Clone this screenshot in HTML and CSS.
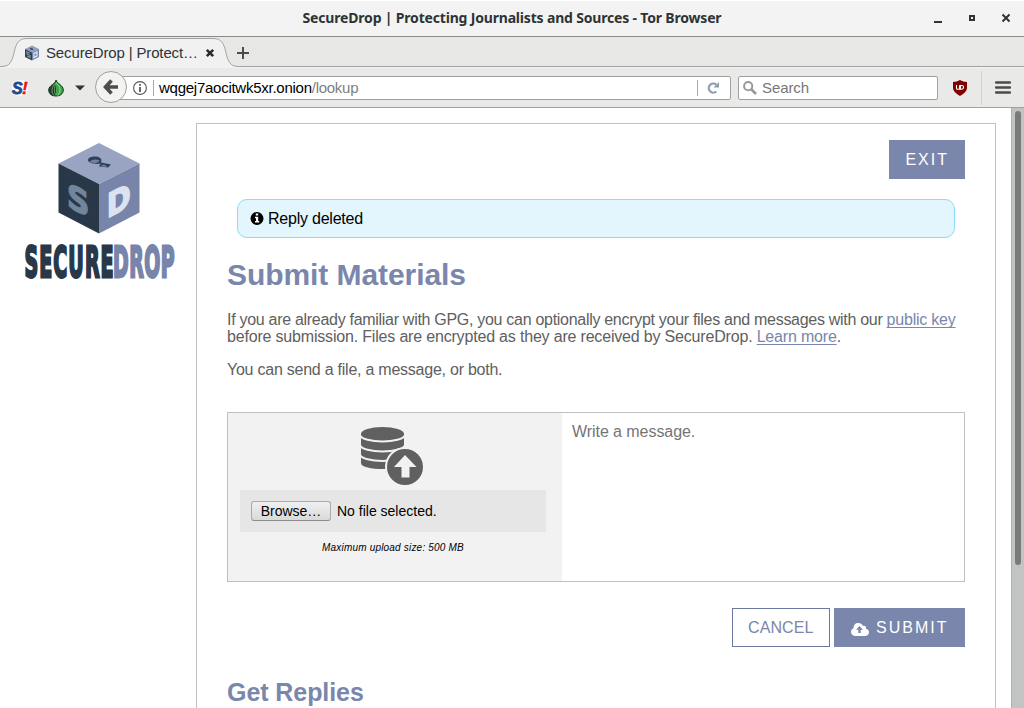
FILE: index.html
```html
<!DOCTYPE html>
<html lang="en">
<head>
<meta charset="utf-8">
<title>SecureDrop | Protecting Journalists and Sources</title>
<link rel="stylesheet" href="styles.css">
</head>
<body>
<div class="window">
  <header class="titlebar">
    <span class="window-title">SecureDrop | Protecting Journalists and Sources - Tor Browser</span>
    <svg class="window-controls" width="78" height="14" viewBox="0 0 78 14">
      <path d="M0 13h8" stroke="#2e3436" stroke-width="2"/>
      <rect x="36" y="7" width="4" height="4" fill="none" stroke="#2e3436" stroke-width="2"/>
      <path d="M68.500 5.500l7 7M75.500 5.500l-7 7" stroke="#2e3436" stroke-width="2"/>
    </svg>
  </header>

  <div class="tabstrip">
    <div class="tab">
      <svg class="tab-shape" width="240" height="30" viewBox="0 0 240 30">
        <path d="M0 30V29.500H2C10 29.500 12 24 14 16C16 7 18 1.500 27 1.500H213C222 1.500 224 7 226 16C228 24 230 29.500 238 29.500H240V30Z" fill="#f1f1f1"/>
        <path d="M0 29.500H2C10 29.500 12 24 14 16C16 7 18 1.500 27 1.500H213C222 1.500 224 7 226 16C228 24 230 29.500 238 29.500H240" fill="none" stroke="#a0a5aa"/>
      </svg>
      <svg class="favicon" width="16" height="16" viewBox="0 0 16 16">
        <path d="M8 .5L15 4 8 7.500 1 4Z" fill="#92a0c0"/>
        <path d="M1 4L8 7.500V15.500L1 12Z" fill="#304055"/>
        <path d="M15 4L8 7.500V15.500L15 12Z" fill="#7382ab"/>
        <path d="M6 8.200L3 7v2l3 1.500v2L3 11" fill="none" stroke="#8192a5" stroke-width="1.200"/>
        <path d="M10 8.500l3-1.500v4l-3 1.500z" fill="none" stroke="#d6deee" stroke-width="1.400"/>
        <path d="M6 3.500l3 1" stroke="#3c4965" stroke-width="1.500"/>
      </svg>
      <span class="tab-label">SecureDrop | Protect…</span>
      <svg class="tab-close" width="8" height="8" viewBox="0 0 8 8"><path d="M.8 .8l6.400 6.400M7.200 .8l-6.400 6.400" stroke="#2a2e30" stroke-width="2.600"/></svg>
    </div>
    <svg class="new-tab" width="12" height="12" viewBox="0 0 12 12"><path d="M6 0v12M0 6h12" stroke="#4c4c4c" stroke-width="2"/></svg>
  </div>

  <div class="toolbar">
    <svg class="noscript" width="18" height="18" viewBox="0 0 18 18">
      <circle cx="9" cy="9" r="8" fill="#fff"/>
      <text x="1" y="14.500" class="noscript-s">S</text>
      <text x="11" y="14.500" class="noscript-mark">!</text>
    </svg>
    <svg class="onion" width="16" height="18" viewBox="0 0 16 18">
      <path d="M8 1C9 5 15.300 6 15.300 11C15.300 15 12 17 8 17S.7 15 .7 11C.7 6 8 5 8 1Z" fill="#3ba548" stroke="#18351b"/>
      <path d="M8 2V17C3 17 1 14 1 11C1 7 7 6 8 2Z" fill="#1d3a22"/>
      <path d="M8 4C3 8 3 13 6 16.500M8 4C6 9 6 13 8 16.500" fill="none" stroke="#8fae92" stroke-width=".8"/>
      <path d="M8 4C13 8 13 12 10 16.500" fill="none" stroke="#8ae28c"/>
    </svg>
    <svg class="caret" width="10" height="6" viewBox="0 0 10 6"><path d="M0 .5h10L5 5.500z" fill="#333"/></svg>
    <div class="address">
      <svg class="back" width="32" height="32" viewBox="0 0 32 32">
        <circle cx="16" cy="16" r="15.500" fill="#f3f3f2" stroke="#a0a0a0"/>
        <path d="M16.500 9.500L10.500 16L16.500 22.500M10.500 16H23" fill="none" stroke="#4d4d4d" stroke-width="3.600"/>
      </svg>
      <div class="urlbar">
        <svg class="identity" width="14" height="14" viewBox="0 0 14 14">
          <circle cx="7" cy="7" r="6.400" fill="none" stroke="#555" stroke-width="1.100"/>
          <path d="M7 3v1.800M7 6v5" stroke="#555" stroke-width="1.800"/>
        </svg>
        <span class="url-rule"></span>
        <span class="url"><span class="url-host">wqgej7aocitwk5xr.onion</span>/lookup</span>
        <span class="reload-rule"></span>
        <svg class="reload" width="13" height="12" viewBox="0 0 13 12">
          <path d="M9.300 9.500A4.500 4.500 0 1 1 9.200 2.700" fill="none" stroke="#8e9cab" stroke-width="2.200"/>
          <path d="M12 0v5.500H6.500z" fill="#8e9cab"/>
        </svg>
      </div>
    </div>
    <div class="searchbar">
      <svg width="14" height="14" viewBox="0 0 14 14"><circle cx="5.200" cy="5.200" r="4.100" fill="none" stroke="#999" stroke-width="2"/><path d="M8 8l5 5" stroke="#999" stroke-width="2.600"/></svg>
      <span>Search</span>
    </div>
    <svg class="ublock" width="14" height="16" viewBox="0 0 14 16">
      <path d="M7 0Q10 2 14 2V8Q14 12 7 16Q0 12 0 8V2Q4 2 7 0Z" fill="#800000"/>
      <path d="M3.500 5v3.200q0 1 1 1h2V5.200M7.500 9V5.500h1.200a1.800 1.800 0 0 1 0 3.700H7" fill="none" stroke="#fff" stroke-width="1.100"/>
    </svg>
    <span class="menu-rule"></span>
    <svg class="menu" width="16" height="13" viewBox="0 0 16 13"><path d="M1.200 1.500h13.600M1.200 6.500h13.600M1.200 11.500h13.600" stroke="#4b4b4b" stroke-width="2.600" stroke-linecap="round"/></svg>
  </div>

  <div class="viewport">
    <div class="page">
      <aside class="brand">
        <svg width="152" height="138" viewBox="0 0 152 138">
          <path d="M75 0L115.500 20.500L75 41L34.500 20.500Z" fill="#98a4c1"/>
          <path d="M34.500 20.500L75 41V90.500L34.500 69.500Z" fill="#283848"/>
          <path d="M115.500 20.500L75 41V90.500L115.500 69.500Z" fill="#7884aa"/>
          <path d="M64 17.500C64 14.500 67 13.500 71 13.500C76 13.500 78.500 16 77 19.500L87 21.500L84 24.500L75 23.500L76.500 20.500C72 21.500 65 20.500 64 17.500Z" fill="#2e405a"/>
          <path d="M65.500 19C67 16.500 72 15.500 75.500 17.500C75 20 70 21 65.500 19ZM76 23L80 21.500L84 24.500Z" fill="#7080a4"/>
          <text class="cube-s" transform="matrix(.94 .48 0 1 43 63)">S</text>
          <text class="cube-d" transform="matrix(.88 -.46 0 1 82.800 75.500)">D</text>
          <text class="wordmark wordmark-secure" transform="matrix(.455 0 0 1 .5 133.500)" textLength="196" lengthAdjust="spacing">SECURE</text>
          <text class="wordmark wordmark-drop" transform="matrix(.45 0 0 1 89 133.500)" textLength="137" lengthAdjust="spacing">DROP</text>
        </svg>
      </aside>
      <main class="panel">
        <div class="panel-top"><a class="btn">EXIT</a></div>
        <div class="flash">
          <svg width="14" height="14" viewBox="0 0 14 14"><circle cx="7" cy="6.500" r="6.500" fill="#000"/><path d="M5.800 1.500h2.400v2H5.800zM5 4.800h3.200v4.200H9.200V10.500H5V9h1V6.300H5z" fill="#fff"/></svg>
          <span>Reply deleted</span>
        </div>
        <h1>Submit Materials</h1>
        <p class="intro"><span class="line-one">If you are already familiar with GPG, you can optionally encrypt your files and messages with our <a>public key</a></span><br><span class="line-two">before submission. Files are encrypted as they are received by SecureDrop. <a>Learn more</a>.</span></p>
        <p class="hint">You can send a file, a message, or both.</p>
        <div class="snippet">
          <div class="attachment">
            <svg class="upload-icon" width="64" height="60" viewBox="0 0 64 60">
              <path d="M1 8V37C1 45 44 45 44 37V8Z" fill="#606060"/>
              <ellipse cx="22.500" cy="8" rx="21.500" ry="7" fill="#606060"/>
              <path d="M0 9C2 17.500 43 17.500 45 9M0 19C2 27.500 43 27.500 45 19M0 28.500C2 37 43 37 45 28.500" fill="none" stroke="#f2f2f2" stroke-width="2"/>
              <circle cx="45" cy="41" r="20" fill="#f2f2f2"/>
              <circle cx="45" cy="41" r="18" fill="#606060"/>
              <path d="M45 29L56.500 41H49.500V51.500H41.500V41H34Z" fill="#f2f2f2"/>
            </svg>
            <div class="picker"><span class="browse">Browse…</span><span class="picked">No file selected.</span></div>
            <span class="limit">Maximum upload size: 500 MB</span>
          </div>
          <div class="message">Write a message.</div>
        </div>
        <div class="actions">
          <a class="btn btn-secondary">CANCEL</a>
          <a class="btn btn-submit"><svg width="18" height="13" viewBox="0 0 18 13"><path d="M4.500 13C2 13 0 11.300 0 9C0 7 1.200 5.700 2.600 5.200C2.300 2 4.500 0 7.300 0C9.500 0 11.200 1.300 12 3C14 2.200 15.500 3.800 15 5.700C16.800 6 18 7.500 18 9.300C18 11.500 16.300 13 14 13Z" fill="#fff"/><path d="M8.500 3L12 6.700H9.700V10H7.300V6.700H5Z" fill="#7a86ac"/></svg><span>SUBMIT</span></a>
        </div>
        <h2>Get Replies</h2>
      </main>
    </div>
    <div class="scrollbar"><div class="thumb"></div></div>
  </div>
</div>
</body>
</html>
```
FILE: styles.css
```css
* { box-sizing: border-box; }
body { margin: 0; font-family: "Liberation Sans", Arial, sans-serif; }
svg { display: block; flex: none; overflow: visible; }
.window { width: 1024px; height: 708px; display: flex; flex-direction: column; overflow: hidden; background: #fff; }

.titlebar { height: 37px; flex: none; display: grid; grid-template-columns: 1fr auto 1fr; align-items: center; background: #f3f3f3; border-top: 1px solid #fff; border-bottom: 1px solid #8b8c88; }
.window-title { grid-column: 2; font: 700 14px/20px "Noto Sans", sans-serif; letter-spacing: -.18px; color: #2e3436; white-space: nowrap; padding-bottom: 2px; }
.window-controls { justify-self: end; margin-right: 12px; margin-bottom: 5px; }

.tabstrip { height: 30px; flex: none; display: flex; align-items: center; background: #e7e7e5; border-bottom: 1px solid #a0a3a3; }
.tab { position: relative; width: 235px; height: 30px; display: flex; align-items: center; padding: 2px 0 0 24px; }
.tab-shape { position: absolute; left: 0; top: 0; }
.favicon, .tab-label, .tab-close { position: relative; }
.tab-label { margin-left: 6px; width: 153px; font-size: 15px; letter-spacing: -.14px; color: #2e3436; white-space: nowrap; }
.tab-close { margin-left: 7px; }
.new-tab { margin: 2px 0 0 2px; }

.toolbar { height: 41px; flex: none; display: flex; align-items: center; background: #e9e9e8; border-top: 1px solid #f3f3f3; border-bottom: 1px solid #a0a0a0; }
.noscript { margin-left: 11px; }
.noscript-s { font: italic 700 16px "Liberation Sans", sans-serif; fill: #1e4a94; stroke: #1e4a94; stroke-width: .8px; }
.noscript-mark { font: italic 700 17px "Liberation Sans", sans-serif; fill: #e11; stroke: #e11; stroke-width: .5px; }
.onion { margin-left: 19px; }
.caret { margin-left: 11px; }
.address { display: flex; align-items: center; margin-left: 10px; width: 636px; }
.back { position: relative; z-index: 1; margin-top: -1px; }
.urlbar { margin-left: -8px; flex: 1; height: 24px; display: flex; align-items: center; padding: 0 11px 0 13px; background: #fff; border: 1px solid #a0a0a0; border-radius: 2px; }
.url-rule, .reload-rule { width: 1px; height: 16px; background: #a8a8a8; }
.url-rule { margin-left: 6px; }
.url { margin-left: 5px; flex: 1; font-size: 15px; letter-spacing: -.26px; color: #808080; white-space: nowrap; }
.url-host { color: #000; }
.reload { margin-left: 9px; margin-right: -1px; }
.searchbar { margin-left: 7px; width: 200px; height: 24px; display: flex; align-items: center; gap: 5px; padding-left: 4px; background: #fff; border: 1px solid #a0a0a0; border-radius: 2px; font-size: 15px; letter-spacing: -.1px; color: #777; }
.ublock { margin-left: 15px; }
.menu-rule { margin-left: 14px; width: 1px; height: 34px; background: #d2d2d2; }
.menu { margin-left: 13px; margin-top: -1px; }

.viewport { flex: 1; min-height: 0; display: flex; }
.page { flex: 1; display: flex; align-items: flex-start; padding: 15px 15px 0 24px; overflow: hidden; }
.brand { width: 172px; padding-top: 20px; flex: none; }
.cube-s, .cube-d { font: 700 33px "DejaVu Sans", sans-serif; stroke-width: 1.500px; }
.cube-s { fill: #71859b; stroke: #71859b; }
.cube-d { fill: #dce3f0; stroke: #dce3f0; }
.wordmark { font: 700 42px "DejaVu Sans", sans-serif; stroke-width: 2.800px; }
.wordmark-secure { fill: #283848; stroke: #283848; }
.wordmark-drop { fill: #7884aa; stroke: #7884aa; }

.panel { width: 800px; height: 620px; flex: none; padding: 16px 30px 0; border: 1px solid #bfbfbf; color: #606060; font-size: 16px; }
.panel-top { display: flex; justify-content: flex-end; }
.btn { height: 39px; display: flex; align-items: center; padding: 0 16px; background: #7a86ac; color: #fff; font-size: 16px; letter-spacing: 2px; white-space: nowrap; }
.flash { height: 39px; margin: 20px 10px 0; display: flex; align-items: center; gap: 4px; padding-left: 12px; background: #e3f6fd; border: 1px solid #8ddaf2; border-radius: 10px; color: #000; letter-spacing: -.23px; }
h1, h2 { margin: 0; color: #7a86ac; font-weight: 700; letter-spacing: -.07px; }
h1 { margin-top: 19px; font-size: 30px; line-height: 36px; }
p { margin: 0; white-space: nowrap; }
.intro { margin-top: 18px; line-height: 17px; }
.intro a { color: #7a86ac; text-decoration: underline; text-decoration-thickness: 1px; text-underline-offset: 2px; text-decoration-skip-ink: none; }
.line-one { letter-spacing: -.293px; }
.line-one a { letter-spacing: -.22px; }
.line-two { letter-spacing: -.183px; }
.hint { margin-top: 16px; line-height: 17px; letter-spacing: -.24px; }
.snippet { margin-top: 34px; height: 170px; display: flex; border: 1px solid #bfbfbf; }
.attachment { width: 334px; display: flex; flex-direction: column; align-items: center; background: #f2f2f2; padding: 13px 16px 0 12px; }
.upload-icon { margin-left: -2px; }
.picker { align-self: stretch; height: 42px; margin-top: 4px; display: flex; align-items: center; padding-left: 11px; background: #e6e6e6; color: #000; font-size: 14px; }
.browse { width: 80px; height: 20px; line-height: 19px; text-align: center; border: 1px solid #aaa; border-bottom-color: #8c8c8c; border-radius: 3px; background: linear-gradient(#f0f0f0, #d9d9d9); }
.picked { margin-left: 6px; }
.limit { margin-top: 10px; font-size: 10px; line-height: 12px; letter-spacing: .19px; font-style: italic; color: #000; }
.message { flex: 1; padding: 10px; line-height: 18px; letter-spacing: -.06px; color: #757575; }
.actions { margin-top: 26px; display: flex; justify-content: flex-end; gap: 4px; }
.btn-secondary { width: 98px; padding: 0 15px; background: #fff; border: 1px solid #6c799f; color: #7a86ac; letter-spacing: .1px; }
.btn-submit { width: 131px; padding-left: 17px; }
.btn-submit span { margin-left: 7px; }
.btn-submit svg { margin-top: 3px; }
h2 { margin-top: 31px; font-size: 25px; line-height: 29px; }

.scrollbar { width: 13px; flex: none; padding: 3px 2px 0 3px; background: #c2c4c3; border-left: 1px solid #b0b2b1; }
.thumb { width: 6px; height: 454px; border-radius: 3px; background: #777b7b; }
```
